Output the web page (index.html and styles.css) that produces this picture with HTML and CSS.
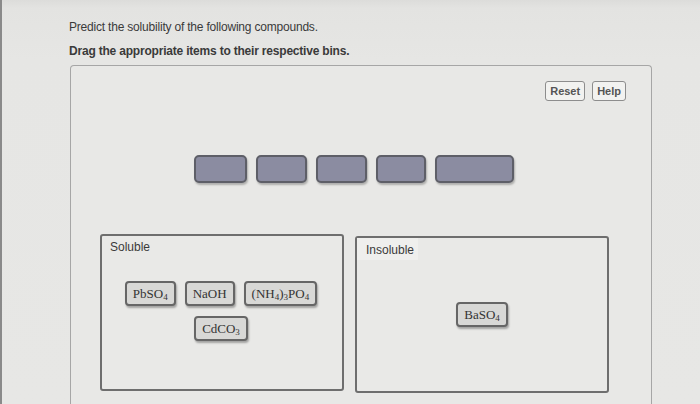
FILE: index.html
```html
<!DOCTYPE html>
<html>
<head>
<meta charset="utf-8">
<link rel="stylesheet" href="styles.css">
</head>
<body>
<div class="page">
  <div class="topband"></div>
  <p class="intro">Predict the solubility of the following compounds.</p>
  <p class="instr">Drag the appropriate items to their respective bins.</p>
  <div class="panel">
    <div class="toolbar">
      <button class="btn">Reset</button>
      <button class="btn">Help</button>
    </div>
    <div class="slots">
      <div class="slot w1"></div>
      <div class="slot w2"></div>
      <div class="slot w2"></div>
      <div class="slot w3"></div>
      <div class="slot w4"></div>
    </div>
    <div class="bins">
      <div class="bin soluble">
        <div class="bin-label">Soluble</div>
        <div class="items">
          <div class="row">
            <span class="chip">PbSO<sub>4</sub></span>
            <span class="chip">NaOH</span>
            <span class="chip">(NH<sub>4</sub>)<sub>3</sub>PO<sub>4</sub></span>
          </div>
          <div class="row">
            <span class="chip">CdCO<sub>3</sub></span>
          </div>
        </div>
      </div>
      <div class="bin insoluble">
        <div class="bin-label light">Insoluble</div>
        <div class="items center">
          <div class="row">
            <span class="chip">BaSO<sub>4</sub></span>
          </div>
        </div>
      </div>
    </div>
  </div>
</div>
</body>
</html>
```
FILE: styles.css
```css
* { box-sizing: border-box; }
html, body { margin: 0; padding: 0; }
body {
  width: 700px;
  height: 404px;
  overflow: hidden;
  background: #e5e5e3;
  font-family: "Liberation Sans", Arial, sans-serif;
  color: #3a3a3a;
}
.page {
  height: 404px;
  border-left: 2px solid #8a8a8a;
  background: linear-gradient(#dcdcda 0, #e3e3e1 8px, #e6e6e4 60px, #e7e7e5 100%);
  display: flex;
  flex-direction: column;
}
.topband { height: 8px; }
.intro {
  margin: 12px 0 0 67px;
  font-size: 12px;
  line-height: 14px;
  letter-spacing: -0.2px;
}
.instr {
  margin: 10px 0 0 67px;
  font-size: 12px;
  line-height: 14px;
  font-weight: bold;
  letter-spacing: -0.2px;
}
.panel {
  margin: 7px 0 0 68px;
  width: 582px;
  flex: 1;
  border: 1px solid #a6a6a6;
  border-bottom: none;
  border-radius: 4px 4px 0 0;
  background: #e8e8e6;
  display: flex;
  flex-direction: column;
}
.toolbar {
  display: flex;
  justify-content: flex-end;
  gap: 7px;
  padding: 15px 25px 0 0;
}
.btn {
  font-family: "Liberation Sans", Arial, sans-serif;
  font-weight: bold;
  font-size: 11px;
  color: #555;
  background: #f2f2f0;
  border: 1px solid #8d8d8d;
  border-radius: 3px;
  height: 20px;
  padding: 0 4px;
  margin: 0;
}
.slots {
  display: flex;
  gap: 9px;
  margin: 54px 0 0 123px;
}
.slot {
  height: 28px;
  background: #8b8ca1;
  border: 2px solid #5e5f68;
  border-radius: 5px;
  box-shadow: 1px 2px 2px rgba(0,0,0,0.25);
}
.w1 { width: 53px; }
.w2 { width: 51px; }
.w3 { width: 50px; }
.w4 { width: 79px; }
.bins {
  display: flex;
  gap: 11px;
  margin: 51px 0 0 29px;
  align-items: flex-start;
}
.bin {
  border: 2px solid #6e6e6e;
  border-radius: 3px;
  background: #e9e9e7;
  height: 157px;
  display: flex;
  flex-direction: column;
}
.soluble { width: 244px; }
.insoluble { width: 254px; margin-top: 2px; }
.bin-label {
  font-size: 12px;
  line-height: 14px;
  color: #3a3a3a;
  padding: 4px 0 0 8px;
  align-self: flex-start;
}
.bin-label.light {
  background: #efefed;
  padding: 5px 4px 3px 9px;
}
.items {
  display: flex;
  flex-direction: column;
  align-items: center;
  gap: 10px;
  margin-top: 27px;
  padding-right: 2px;
}
.items.center { margin-top: 42px; padding-right: 0; }
.row {
  display: flex;
  gap: 9px;
  justify-content: center;
}
.chip {
  font-family: "Liberation Serif", "Times New Roman", serif;
  font-size: 13px;
  color: #333;
  background: #d8d8d6;
  border: 2px solid #666;
  border-radius: 4px;
  height: 25px;
  line-height: 21px;
  padding: 0 6px;
  box-shadow: 1px 2px 2px rgba(0,0,0,0.3);
  white-space: nowrap;
}
.chip sub {
  font-size: 9px;
  vertical-align: -2px;
  line-height: 0;
}
```
